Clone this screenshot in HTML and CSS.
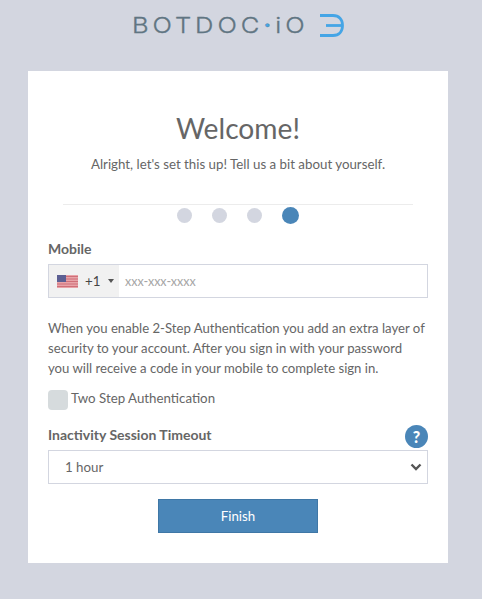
FILE: index.html
```html
<!DOCTYPE html>
<html lang="en">
<head>
<meta charset="utf-8">
<title>Welcome</title>
<link rel="stylesheet" href="styles.css">
</head>
<body>
<header class="brand">
  <span class="brand-name">BOTDOC<span class="brand-dot">·</span><span class="brand-io">iO</span></span>
  <svg class="brand-mark" width="24" height="23" viewBox="0 0 24 23" fill="none" stroke="#45a5e6" stroke-width="2.8">
    <path d="M0 1.5H13C19 1.5 22.5 5.5 22.5 11.5C22.5 17.5 19 21.5 13 21.5H0"/>
    <path d="M6 11.5H23"/>
  </svg>
</header>
<main class="card">
  <h1 class="title">Welcome!</h1>
  <p class="subtitle">Alright, let's set this up! Tell us a bit about yourself.</p>
  <div class="steps">
    <span class="dot"></span><span class="dot"></span><span class="dot"></span><span class="dot dot-active"></span>
  </div>
  <label class="label label-mobile">Mobile</label>
  <div class="phone">
    <div class="country">
      <svg class="flag" width="21" height="13" viewBox="0 0 21 13">
        <rect width="21" height="13" fill="#e8a3a8"/>
        <path d="M0 1.5H21M0 4H21M0 6.5H21M0 9H21M0 11.5H21" stroke="#cf6f78" stroke-width="1"/>
        <rect width="9" height="7" fill="#5c5f93"/>
      </svg>
      <span class="code">+1</span>
      <span class="caret"></span>
    </div>
    <span class="placeholder">xxx-xxx-xxxx</span>
  </div>
  <p class="info">When you enable 2-Step Authentication you add an extra layer of security to your account. After you sign in with your password you will receive a code in your mobile to complete sign in.</p>
  <div class="check-row">
    <span class="check"></span>
    <span class="check-label">Two Step Authentication</span>
  </div>
  <div class="timeout-head">
    <label class="label label-timeout">Inactivity Session Timeout</label>
    <span class="help">?</span>
  </div>
  <div class="select">
    <span>1 hour</span>
    <svg class="chevron" width="12" height="8" viewBox="0 0 12 8" fill="none" stroke="#555" stroke-width="2.4"><path d="M1.5 1.5L6 6L10.5 1.5"/></svg>
  </div>
  <div class="actions"><button class="finish" type="button">Finish</button></div>
</main>
</body>
</html>
```

FILE: styles.css
```css
* { box-sizing: border-box; }
html, body { margin: 0; height: 599px; overflow: hidden; }
body {
  background: #d3d6e0;
  font-family: Lato, "Noto Sans", sans-serif;
  color: #666;
  display: flex;
  flex-direction: column;
  align-items: center;
  padding-right: 6px;
}
.brand {
  height: 71px;
  width: 100%;
  display: flex;
  justify-content: center;
  align-items: flex-start;
  gap: 16px;
  padding: 14px 0 0;
}
.brand-name {
  width: 172px;
  white-space: nowrap;
  font-family: Inter, sans-serif;
  font-weight: 300;
  font-size: 22px;
  line-height: 22px;
  letter-spacing: 3.4px;
  color: #607582;
  -webkit-text-stroke: .3px #607582;
  transform: scaleX(1.16);
  transform-origin: left center;
}
.brand-dot { color: #45a5e6; font-weight: 600; }
.brand-mark { display: block; }
.card {
  width: 420px;
  height: 492px;
  background: #fff;
  padding: 38px 20px 0;
}
.title {
  margin: 0;
  font-size: 28.2px;
  font-weight: 400;
  line-height: 38px;
  text-align: center;
  color: #666;
}
.subtitle {
  margin: 8px 0 0;
  font-size: 13.3px;
  line-height: 18px;
  text-align: center;
}
.steps {
  margin: 31px 15px 0;
  height: 21px;
  border-top: 1px solid #ececec;
  display: flex;
  justify-content: center;
  align-items: flex-start;
  gap: 20px;
  padding-top: 2px;
  padding-right: 1px;
}
.dot { width: 15px; height: 15px; border-radius: 50%; background: #d3d6e0; margin-top: 1px; }
.dot-active { width: 17px; height: 17px; background: #4a86b8; margin-top: 0; }
.label {
  display: block;
  font-size: 14px;
  font-weight: 700;
  line-height: 18px;
  color: #666;
}
.label-mobile { margin-top: 15px; }
.label-timeout { margin-top: 1px; }
.phone {
  margin-top: 6px;
  height: 34px;
  border: 1px solid #d3d6e0;
  display: flex;
  align-items: center;
}
.country {
  width: 70px;
  height: 100%;
  background: #f1f1f1;
  display: flex;
  align-items: center;
  padding-left: 8px;
}
.flag { display: block; }
.code { margin-left: 7px; font-size: 13.3px; color: #444; }
.caret {
  margin-left: 8px;
  border-left: 3px solid transparent;
  border-right: 3px solid transparent;
  border-top: 4px solid #555;
}
.placeholder { margin-left: 6px; font-size: 12.5px; color: #a5a5a5; }
.info {
  margin: 20px 0 0;
  padding-right: 2px;
  font-size: 13.15px;
  line-height: 20px;
}
.check-row { margin-top: 12px; display: flex; align-items: center; gap: 3px; }
.check { width: 20px; height: 20px; border-radius: 4px; background: #d6dbdd; }
.check-label { font-size: 13.3px; line-height: 18px; position: relative; top: -2px; }
.timeout-head {
  margin-top: 15px;
  height: 23px;
  display: flex;
  justify-content: space-between;
  align-items: flex-start;
}
.help {
  width: 23px;
  height: 23px;
  border-radius: 50%;
  background: #4a86b8;
  color: #fff;
  font-weight: 900;
  font-size: 16px;
  display: flex;
  align-items: center;
  justify-content: center;
}
.select {
  margin-top: 2px;
  height: 34px;
  border: 1px solid #d3d6e0;
  display: flex;
  justify-content: space-between;
  align-items: center;
  padding: 0 5px 0 16px;
  font-size: 13.3px;
}
.actions { margin-top: 15px; display: flex; justify-content: center; }
.finish {
  width: 160px;
  height: 34px;
  background: #4a86b8;
  border: 1px solid #3f77a6;
  color: #fff;
  font-family: inherit;
  font-size: 13.3px;
  padding: 0;
}
```
